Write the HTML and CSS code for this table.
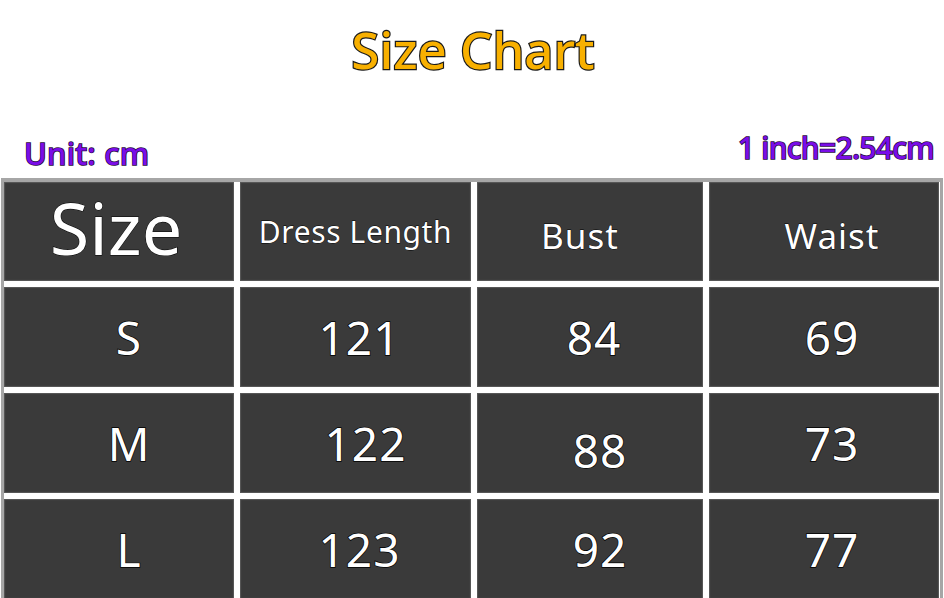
FILE: index.html
```html
<!DOCTYPE html>
<html>
<head>
<meta charset="utf-8">
<link rel="stylesheet" href="styles.css">
</head>
<body>
<div class="page">
  <h1 class="title">Size Chart</h1>
  <div class="units">
    <span class="unit">Unit: cm</span>
    <span class="unit inch">1 inch=2.54cm</span>
  </div>
  <div class="table">
    <div class="cell head big">Size</div>
    <div class="cell head small">Dress Length</div>
    <div class="cell head mid shift-l">Bust</div>
    <div class="cell head mid shift-r">Waist</div>

    <div class="cell val nudge-3">S</div>
    <div class="cell val nudge-1">121</div>
    <div class="cell val nudge-1">84</div>
    <div class="cell val shift-r">69</div>

    <div class="cell val nudge-3">M</div>
    <div class="cell val nudge-2">122</div>
    <div class="cell val nudge-2 low">88</div>
    <div class="cell val shift-r">73</div>

    <div class="cell val nudge-3">L</div>
    <div class="cell val nudge-1">123</div>
    <div class="cell val nudge-2">92</div>
    <div class="cell val shift-r">77</div>
  </div>
</div>
</body>
</html>
```

FILE: styles.css
```css
html, body {
  margin: 0;
  padding: 0;
  background: #ffffff;
}
body {
  width: 944px;
  height: 598px;
  overflow: hidden;
  font-family: "Noto Sans", "Open Sans", sans-serif;
}
.page {
  display: flex;
  flex-direction: column;
}
.title {
  margin: 0;
  height: 100px;
  display: flex;
  justify-content: center;
  align-items: flex-start;
  padding-top: 19px;
  box-sizing: border-box;
  font-size: 51px;
  font-weight: 500;
  line-height: 1.2;
  color: #f8b000;
  -webkit-text-stroke: 2.4px #1a1a1a;
  paint-order: stroke fill;
  padding-left: 2px;
}
.units {
  height: 78px;
  display: flex;
  justify-content: space-between;
  align-items: flex-start;
  padding: 35px 10px 0 24px;
  box-sizing: border-box;
}
.unit {
  font-size: 31px;
  font-weight: 500;
  line-height: 1.2;
  color: #7a0de8;
  -webkit-text-stroke: 1.6px #2a0a40;
  paint-order: stroke fill;
  letter-spacing: 0.2px;
}
.inch {
  margin-top: -5px;
  font-size: 30px;
  letter-spacing: -0.7px;
}
.table {
  margin-left: 1px;
  width: 942px;
  box-sizing: border-box;
  border: 3px solid #a6a6a6;
  border-bottom: none;
  border-top-width: 4px;
  background: #ffffff;
  display: grid;
  grid-template-columns: 230px 231px 226px 230px;
  grid-template-rows: 99px 100px 100px 100px;
  column-gap: 6px;
  row-gap: 6px;
}
.cell {
  background: #3a3a3a;
  box-shadow: inset 0 0 1px 1px #5a5a5a;
  display: flex;
  align-items: center;
  justify-content: center;
  box-sizing: border-box;
  color: #ffffff;
  -webkit-text-stroke: 1.4px #000;
  paint-order: stroke fill;
  line-height: 1;
}
.head.big {
  font-size: 72px;
  padding-bottom: 10px;
  padding-right: 6px;
  -webkit-text-stroke: 1px #000;
}
.head.small {
  font-size: 30px;
  letter-spacing: 0.6px;
  -webkit-text-stroke: 0.8px #000;
}
.head.mid {
  font-size: 35px;
  letter-spacing: 1px;
  padding-top: 8px;
  -webkit-text-stroke: 0.8px #000;
}
.shift-l {
  padding-right: 20px;
}
.shift-r {
  padding-left: 16px;
}
.val {
  font-size: 46px;
  letter-spacing: 1px;
}
.nudge-1 {
  padding-left: 8px;
}
.nudge-2 {
  padding-left: 20px;
}
.nudge-3 {
  padding-left: 20px;
}
.low {
  padding-top: 14px;
}
```
